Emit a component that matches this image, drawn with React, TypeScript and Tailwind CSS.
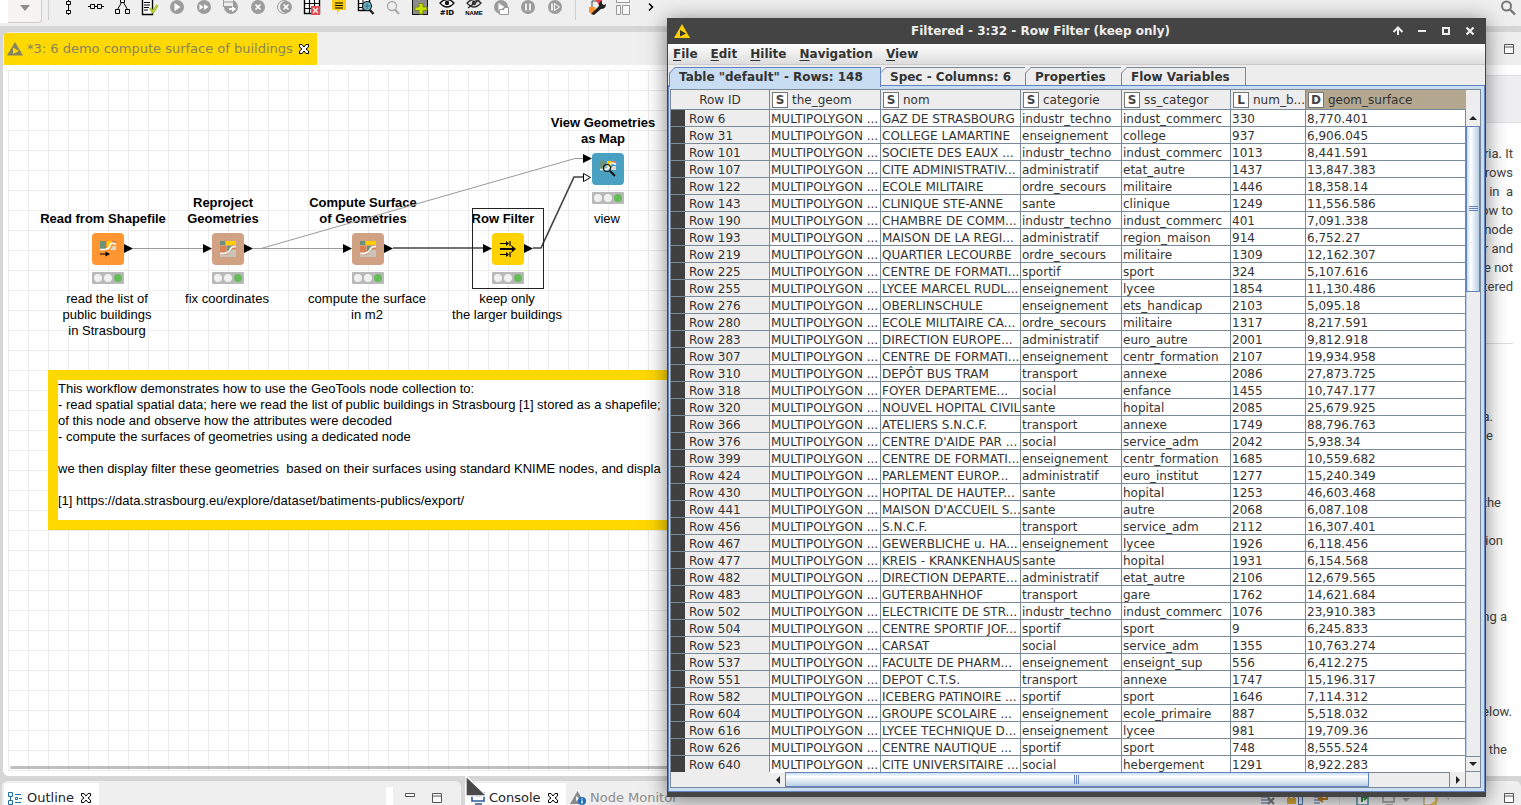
import React from "react";

type Row = [string, string, string, string, string, string];

const rows: Row[] = [
  ["Row 6", "GAZ DE STRASBOURG", "industr_techno", "indust_commerc", "330", "8,770.401"],
  ["Row 31", "COLLEGE LAMARTINE", "enseignement", "college", "937", "6,906.045"],
  ["Row 101", "SOCIETE DES EAUX ...", "industr_techno", "indust_commerc", "1013", "8,441.591"],
  ["Row 107", "CITE ADMINISTRATIV...", "administratif", "etat_autre", "1437", "13,847.383"],
  ["Row 122", "ECOLE MILITAIRE", "ordre_secours", "militaire", "1446", "18,358.14"],
  ["Row 143", "CLINIQUE STE-ANNE", "sante", "clinique", "1249", "11,556.586"],
  ["Row 190", "CHAMBRE DE COMM...", "industr_techno", "indust_commerc", "401", "7,091.338"],
  ["Row 193", "MAISON DE LA REGI...", "administratif", "region_maison", "914", "6,752.27"],
  ["Row 219", "QUARTIER LECOURBE", "ordre_secours", "militaire", "1309", "12,162.307"],
  ["Row 225", "CENTRE DE FORMATI...", "sportif", "sport", "324", "5,107.616"],
  ["Row 255", "LYCEE MARCEL RUDL...", "enseignement", "lycee", "1854", "11,130.486"],
  ["Row 276", "OBERLINSCHULE", "enseignement", "ets_handicap", "2103", "5,095.18"],
  ["Row 280", "ECOLE MILITAIRE CA...", "ordre_secours", "militaire", "1317", "8,217.591"],
  ["Row 283", "DIRECTION EUROPE...", "administratif", "euro_autre", "2001", "9,812.918"],
  ["Row 307", "CENTRE DE FORMATI...", "enseignement", "centr_formation", "2107", "19,934.958"],
  ["Row 310", "DEPÔT BUS TRAM", "transport", "annexe", "2086", "27,873.725"],
  ["Row 318", "FOYER DEPARTEME...", "social", "enfance", "1455", "10,747.177"],
  ["Row 320", "NOUVEL HOPITAL CIVIL", "sante", "hopital", "2085", "25,679.925"],
  ["Row 366", "ATELIERS S.N.C.F.", "transport", "annexe", "1749", "88,796.763"],
  ["Row 376", "CENTRE D'AIDE PAR ...", "social", "service_adm", "2042", "5,938.34"],
  ["Row 399", "CENTRE DE FORMATI...", "enseignement", "centr_formation", "1685", "10,559.682"],
  ["Row 424", "PARLEMENT EUROP...", "administratif", "euro_institut", "1277", "15,240.349"],
  ["Row 430", "HOPITAL DE HAUTEP...", "sante", "hopital", "1253", "46,603.468"],
  ["Row 441", "MAISON D'ACCUEIL S...", "sante", "autre", "2068", "6,087.108"],
  ["Row 456", "S.N.C.F.", "transport", "service_adm", "2112", "16,307.401"],
  ["Row 467", "GEWERBLICHE u. HA...", "enseignement", "lycee", "1926", "6,118.456"],
  ["Row 477", "KREIS - KRANKENHAUS", "sante", "hopital", "1931", "6,154.568"],
  ["Row 482", "DIRECTION DEPARTE...", "administratif", "etat_autre", "2106", "12,679.565"],
  ["Row 483", "GUTERBAHNHOF", "transport", "gare", "1762", "14,621.684"],
  ["Row 502", "ELECTRICITE DE STR...", "industr_techno", "indust_commerc", "1076", "23,910.383"],
  ["Row 504", "CENTRE SPORTIF JOF...", "sportif", "sport", "9", "6,245.833"],
  ["Row 523", "CARSAT", "social", "service_adm", "1355", "10,763.274"],
  ["Row 537", "FACULTE DE PHARM...", "enseignement", "enseignt_sup", "556", "6,412.275"],
  ["Row 551", "DEPOT C.T.S.", "transport", "annexe", "1747", "15,196.317"],
  ["Row 582", "ICEBERG PATINOIRE ...", "sportif", "sport", "1646", "7,114.312"],
  ["Row 604", "GROUPE SCOLAIRE ...", "enseignement", "ecole_primaire", "887", "5,518.032"],
  ["Row 616", "LYCEE TECHNIQUE D...", "enseignement", "lycee", "981", "19,709.36"],
  ["Row 626", "CENTRE NAUTIQUE ...", "sportif", "sport", "748", "8,555.524"],
  ["Row 640", "CITE UNIVERSITAIRE ...", "social", "hebergement", "1291", "8,922.283"],
];

const columns = [
  { type: "S", name: "the_geom" },
  { type: "S", name: "nom" },
  { type: "S", name: "categorie" },
  { type: "S", name: "ss_categor" },
  { type: "L", name: "num_b..." },
  { type: "D", name: "geom_surface" },
];

/* ---------- toolbar ---------- */

const Disc = ({ children }: { children?: React.ReactNode }) => (
  <>
    <circle cx="14" cy="7" r="7" fill="#9c9c9c" />
    {children}
  </>
);

const TableGlyph = () => (
  <>
    <rect x="6.500" y="-3.500" width="15" height="17" fill="#fff" stroke="#000" strokeWidth="1.400" />
    <path d="M6 3.500H21M6 8.500H21M11.500 -3V13M16.500 -3V13" stroke="#000" strokeWidth="1.200" />
  </>
);

const tools: { label: string; icon: React.ReactNode }[] = [
  {
    label: "Align vertically",
    icon: <path d="M11.500 1.500h4v3h-4zM11.500 10.500h4v3h-4zM13.500 0v1.500M13.500 4.500v6M13.500 13.500v1.500" fill="none" stroke="#000" />,
  },
  {
    label: "Align horizontally",
    icon: <path d="M8.500 4.500h4v4h-4zM15.500 4.500h4v4h-4zM6 6.500h2.500M12.500 6.500h3M19.500 6.500h2.500" fill="none" stroke="#000" />,
  },
  {
    label: "Auto layout",
    icon: <path d="M11.500 -1.500h4v4h-4zM6.500 9.500h4v4h-4zM16.500 9.500h4v4h-4zM12.500 2.500l-4 7M14.500 2.500l4 7" fill="none" stroke="#000" />,
  },
  {
    label: "Configure",
    icon: (
      <>
        <path d="M6.500 -2H16.500V14.500H6.500z" fill="#fff" stroke="#000" strokeWidth="1.400" />
        <path d="M8 2.500h6M8 5h6M8 7.500h5M8 10h4" stroke="#000" />
        <path d="M14 8l3 4 4.500-7" fill="none" stroke="#afc636" strokeWidth="2.600" />
      </>
    ),
  },
  { label: "Execute", icon: <Disc><path d="M11.500 3l6 4-6 4z" fill="#fff" /></Disc> },
  { label: "Execute all", icon: <Disc><path d="M9.500 4l4 3-4 3zM14 4l4.500 3-4.500 3z" fill="#fff" /></Disc> },
  {
    label: "Execute and open view",
    icon: (
      <Disc>
        <rect x="6.500" y="-1.500" width="10" height="8" fill="#eee" stroke="#999" />
        <path d="M7 2h9" stroke="#999" />
        <path d="M12 8h3V6l4 3-4 3v-2h-3z" fill="#fff" />
      </Disc>
    ),
  },
  { label: "Cancel", icon: <Disc><path d="M11.500 4.500l5 5M16.500 4.500l-5 5" stroke="#fff" strokeWidth="1.700" /></Disc> },
  {
    label: "Cancel all",
    icon: (
      <>
        <circle cx="13" cy="7" r="6.500" fill="none" stroke="#999" />
        <circle cx="15" cy="7" r="6" fill="#9c9c9c" />
        <path d="M12.500 4.500l5 5M17.500 4.500l-5 5" stroke="#fff" strokeWidth="1.700" />
      </>
    ),
  },
  {
    label: "Reset",
    icon: (
      <>
        <TableGlyph />
        <rect x="13" y="6" width="9" height="9" fill="#e24a4f" />
        <path d="M15 8l5 5M20 8l-5 5" stroke="#fff" strokeWidth="1.200" />
      </>
    ),
  },
  {
    label: "Workflow annotation",
    icon: (
      <>
        <path d="M7 -2H21V10H15L12 13.500V10H7z" fill="#fbce14" />
        <path d="M10 3h8M10 5.500h8M10 8h8" stroke="#000" strokeWidth="1.200" />
      </>
    ),
  },
  {
    label: "Open view",
    icon: (
      <>
        <rect x="6.500" y="-3.500" width="11" height="14" fill="#fff" stroke="#000" strokeWidth="1.400" />
        <path d="M6 3.500H18M6 7.500H18M11 -2V10" stroke="#000" />
        <circle cx="15" cy="6" r="4.500" fill="#6fb6cc" stroke="#222" strokeWidth="1.200" />
        <path d="M12 6h6M15 3v6" stroke="#346c80" />
        <path d="M18 10l3.500 4" stroke="#222" strokeWidth="2.400" />
      </>
    ),
  },
  {
    label: "Find node",
    icon: (
      <>
        <circle cx="13" cy="6" r="4.500" fill="#eee" stroke="#aaa" strokeWidth="1.300" />
        <path d="M16 9.500l4 4.500" stroke="#aaa" strokeWidth="2.200" />
      </>
    ),
  },
  {
    label: "Add",
    icon: (
      <>
        <rect x="6.500" y="-1.500" width="15" height="16" fill="#8c8c8c" stroke="#111" />
        <path d="M13 3.500h4v3.500h4v3.500h-4v3.500h-4v-3.500H9V7h4z" fill="#c8e000" stroke="#7c8a20" />
      </>
    ),
  },
  {
    label: "Show node IDs",
    icon: (
      <>
        <path d="M7 3q7-7 14 0q-7 8-14 0z" fill="#fff" stroke="#111" strokeWidth="1.300" />
        <circle cx="14" cy="3" r="2.200" fill="#111" />
        <text x="14" y="15" textAnchor="middle" fontSize="7" fontWeight="bold" fontFamily="DejaVu Sans">#ID</text>
      </>
    ),
  },
  {
    label: "Hide node names",
    icon: (
      <>
        <path d="M7 3q7-7 14 0q-7 8-14 0z" fill="#ddd" stroke="#333" strokeWidth="1.300" />
        <circle cx="14" cy="3" r="2.200" fill="#333" />
        <path d="M8 8L20 -1" stroke="#333" strokeWidth="1.500" />
        <text x="14" y="15" textAnchor="middle" fontSize="6" fontWeight="bold" fontFamily="Liberation Sans">NAME</text>
      </>
    ),
  },
  {
    label: "Step loop",
    icon: (
      <Disc>
        <path d="M11.500 3l6 4-6 4z" fill="#fff" />
        <path d="M12.500 14.500V9.500H17V7.500h4.500v7z" fill="#fff" stroke="#999" />
      </Disc>
    ),
  },
  { label: "Pause", icon: <Disc><path d="M12 3.500v7M16 3.500v7" stroke="#fff" strokeWidth="1.600" /></Disc> },
  { label: "Resume", icon: <Disc><path d="M11 3.500v7" stroke="#fff" strokeWidth="1.600" /><path d="M13.500 3.500l5 3.500-5 3.500z" fill="none" stroke="#fff" /></Disc> },
];

const ToolButton = ({ label, children }: { label: string; children: React.ReactNode }) => (
  <button aria-label={label} className="h-5 w-[27px] shrink-0">
    <svg viewBox="0 0 27 20" className="h-5 w-[27px]">{children}</svg>
  </button>
);

const Toolbar = () => (
  <header className="flex h-[26px] shrink-0 items-start bg-[#efefef]">
    <div className="h-[23px] w-2 bg-white" />
    <button aria-label="Zoom" className="flex h-[23px] w-[34px] items-start justify-center rounded-br-sm border-r border-b border-[#d0cecb] bg-[#f5f4f3] pt-[5px]">
      <svg viewBox="0 0 10 6" className="h-[6px] w-[10px]"><path d="M0 0h10L5 6z" fill="#8b8e8f" /></svg>
    </button>
    <div className="ml-[6px] h-5 w-px bg-[#d0d0d0]" />
    <div className="ml-[6px] flex">
      {tools.map((t) => (
        <ToolButton key={t.label} label={t.label}>{t.icon}</ToolButton>
      ))}
    </div>
    <div className="ml-[7px] h-5 w-px bg-[#d0d0d0]" />
    <div className="ml-[7px] flex">
      <ToolButton label="Preferences">
        <path d="M6 7h6v5q-3 3-6 0z" fill="#ff9232" />
        <path d="M9 7V1h5" fill="none" stroke="#444" />
        <path d="M12 -1h7v3l-3 3z" fill="#ee4050" />
        <path d="M8 14l8-8q-1-4 3-5v3l2 1 2-1q0 5-5 5l-7 6z" fill="#222" />
      </ToolButton>
      <ToolButton label="Layout editor">
        <path d="M6.500 -2.500h13v5h-13zM6.500 5.500h4v9h-4zM12.500 5.500h7v9h-7z" fill="#f8f8f8" stroke="#999" />
      </ToolButton>
      <ToolButton label="More">
        <path d="M12 3.500l3.500 3.500-3.500 3.500" fill="none" stroke="#000" strokeWidth="1.500" />
      </ToolButton>
    </div>
    <button aria-label="Search" className="mr-[5px] ml-auto h-4 w-4">
      <svg viewBox="0 0 16 16" className="h-4 w-4">
        <circle cx="6.500" cy="6" r="4.500" fill="none" stroke="#777" strokeWidth="2" />
        <path d="M10 9.500l5 5" stroke="#777" strokeWidth="2.400" />
      </svg>
    </button>
  </header>
);

/* ---------- shared glyphs ---------- */

const CloseX = () => (
  <svg viewBox="0 0 12 12" className="h-3 w-3">
    <path d="M1.500 1.500h2.500L6 4l2-2.500h2.500V4L8 6l2.500 2v2.500H8L6 8l-2 2.500H1.500V8L4 6 1.500 4z" fill="#fff" stroke="#000" />
  </svg>
);

const Maximize = () => (
  <svg viewBox="0 0 10 10" className="h-[10px] w-[10px]">
    <path d="M.5.5h9v9h-9zM.5 3h9" fill="#fff" stroke="#555" />
  </svg>
);

/* ---------- workflow canvas ---------- */

const SquareMap = () => (
  <>
    <rect x="8" y="8" width="5" height="4" fill="#6c9078" />
    <rect x="14" y="8" width="10" height="4" fill="#fc0" />
    <rect x="8" y="13" width="6" height="6" fill="#d98254" />
    <rect x="15" y="13" width="4" height="5" fill="#6c9078" />
    <rect x="20" y="13" width="4" height="3" fill="#d98254" />
    <path d="M8 24V22h7q3-1 4-5h5v7z" fill="#c9c3b8" />
    <path d="M8 20.500h4q5-1 6-4t6-3" fill="none" stroke="#fff" strokeWidth="1.600" />
  </>
);

const FlatMap = () => (
  <>
    <rect x="8" y="8" width="6" height="8" fill="#6c9078" />
    <path d="M15 8h5l-2 6-3 2z" fill="#fc0" />
    <path d="M20 8h4v3h-4z" fill="#d98254" />
    <path d="M18 17l3-4h3v4z" fill="#dfdad0" />
    <path d="M8 16.500h4q5 0 6-4t6-1" fill="none" stroke="#fff" strokeWidth="1.600" />
  </>
);

type NodeDef = {
  place: string;
  title: string;
  note: string;
  color: string;
  glyph: React.ReactNode;
};

const nodes: NodeDef[] = [
  {
    place: "left-[29px] top-[130px]",
    title: "\nRead from Shapefile",
    note: "read the list of\npublic buildings\nin Strasbourg",
    color: "bg-[#ff9632]",
    glyph: <><FlatMap /><path d="M8 21h7" stroke="#000" strokeWidth="1.200" /><path d="M13.500 18.500l4.500 2.500-4.500 2.500z" /></>,
  },
  {
    place: "left-[149px] top-[130px]",
    title: "Reproject\nGeometries",
    note: "fix coordinates",
    color: "bg-[#d1a184]",
    glyph: <SquareMap />,
  },
  {
    place: "left-[289px] top-[130px]",
    title: "Compute Surface\nof Geometries",
    note: "compute the surface\nin m2",
    color: "bg-[#d1a184]",
    glyph: <SquareMap />,
  },
  {
    place: "left-[429px] top-[130px]",
    title: "\nRow Filter",
    note: "keep only\nthe larger buildings",
    color: "bg-[#ffd200]",
    glyph: (
      <>
        <path d="M8 10.500h7M8 21.500h7M18 8v5M18 19v5" stroke="#000" strokeWidth="1.200" />
        <path d="M8 16h13" stroke="#000" strokeWidth="2" />
        <path d="M14 8l3 2.500-3 2.500zM14 19l3 2.500-3 2.500zM19 12l5 4-5 4 1.500-4z" />
      </>
    ),
  },
  {
    place: "left-[529px] top-[50px]",
    title: "View Geometries\nas Map",
    note: "view",
    color: "bg-[#4aa0c0]",
    glyph: (
      <>
        <FlatMap />
        <circle cx="15" cy="15" r="3.500" fill="#fff" fillOpacity=".3" stroke="#111" strokeWidth="1.200" />
        <path d="M18 18l5 5" stroke="#111" strokeWidth="2" />
      </>
    ),
  },
];

const NodeCard = ({ node }: { node: NodeDef }) => (
  <div className={`absolute flex w-[152px] flex-col items-center whitespace-pre text-center text-[13px] leading-4 ${node.place}`}>
    <div className="mr-[10px] h-8 font-bold">{node.title}</div>
    <div className={`mt-[6px] h-8 w-8 rounded-sm ${node.color}`}>
      <svg viewBox="0 0 32 32" className="h-8 w-8">{node.glyph}</svg>
    </div>
    <div className="mt-[7px] flex h-3 w-8 items-center justify-center gap-[2px] rounded-[1px] bg-[#b9b9b9]">
      <span className="h-2 w-2 rounded-full bg-[#f0f0f0]" />
      <span className="h-2 w-2 rounded-full bg-[#f0f0f0]" />
      <span className="h-2 w-2 rounded-full bg-[#66bc59]" />
    </div>
    <div className="mt-[7px] mr-[2px]">{node.note}</div>
  </div>
);

const annotation = `This workflow demonstrates how to use the GeoTools node collection to:
- read spatial spatial data; here we read the list of public buildings in Strasbourg [1] stored as a shapefile;
of this node and observe how the attributes were decoded
- compute the surfaces of geometries using a dedicated node

we then display filter these geometries  based on their surfaces using standard KNIME nodes, and displa

[1] https://data.strasbourg.eu/explore/dataset/batiments-publics/export/`;

const Canvas = () => (
  <div className="relative flex-1 overflow-hidden bg-white pt-[5px] pb-[5px] pl-[5px] font-['Liberation_Sans',sans-serif] text-black">
    <div className="h-full bg-[linear-gradient(to_right,#ececec_1px,transparent_1px),linear-gradient(to_bottom,#ececec_1px,transparent_1px)] bg-size-[20px_20px]" />
    {nodes.map((n) => (
      <NodeCard key={n.title} node={n} />
    ))}
    <svg viewBox="0 0 664 300" className="absolute top-0 left-0 h-[300px] w-[664px]">
      <g fill="none" stroke="#999">
        <path d="M130 183.500H202M250 183.500H342" />
        <path d="M258 183.500L572 93.500H582" />
      </g>
      <g fill="none" stroke="#444" strokeWidth="1.700">
        <path d="M390 183H482M530 183H538L571 112H580" />
      </g>
      <path d="M121 179l9 4.500-9 4.500zM200 179l9 4.500-9 4.500zM241 179l9 4.500-9 4.500zM340 179l9 4.500-9 4.500zM381 179l9 4.500-9 4.500zM480 179l9 4.500-9 4.500zM521 179l9 4.500-9 4.500zM580 89l9 4.500-9 4.500z" />
      <path d="M580.500 108.500l7 4-7 4z" fill="#fff" stroke="#000" />
      <rect x="469.500" y="143.500" width="71" height="80" fill="none" stroke="#222" />
    </svg>
    <div className="absolute top-[305px] right-0 left-[45px] h-[160px] overflow-hidden border-10 border-r-0 border-[#ffd800] bg-white pt-px text-[13px] leading-4 whitespace-pre">
      {annotation}
    </div>
    <div className="absolute right-0 bottom-[7px] left-[7px] h-[3px] rounded-full bg-black/25" />
  </div>
);

const Editor = () => (
  <section className="flex min-w-0 flex-1 flex-col overflow-hidden rounded-md bg-[#efefef]">
    <div className="flex h-[33px] shrink-0 pt-px pl-px">
      <div className="flex w-[313px] items-center bg-[#ffd800] pl-[3px] text-[13px] text-[#8a8460]">
        <svg viewBox="0 0 16 14" className="h-[14px] w-4">
          <path d="M8 0l8 13.500H0z" fill="#85835f" />
          <path d="M6 5.500l6 3.500-6 3z" fill="#ffd800" />
        </svg>
        <span className="mr-[5px] ml-1 whitespace-nowrap">*3: 6 demo compute surface of buildings</span>
        <button aria-label="Close workflow"><CloseX /></button>
      </div>
    </div>
    <Canvas />
  </section>
);

/* ---------- node description ---------- */

const Description = () => (
  <aside className="flex w-[360px] shrink-0 flex-col bg-[#efefef]">
    <div className="flex h-[33px] shrink-0 items-center justify-end pr-[7px]">
      <button aria-label="Maximize description"><Maximize /></button>
    </div>
    <div className="flex min-h-0 flex-1 flex-col overflow-hidden bg-white pt-[10px] text-right font-[Roboto,sans-serif] text-[13px] leading-[19px] whitespace-pre text-[#444]">
      <div className="h-12 shrink-0 border-t border-b border-[#dfdfe1] bg-[#efeff1]" />
      <p className="mt-[21px] pr-2">{"ria. It\nrows\nin  a\now to\nnode\nr and\ne not\ntered"}</p>
      <hr className="mt-[47px] mr-2 border-[#ddd]" />
      <p className="mt-[63px] pr-7">{"a.\ne"}</p>
      <p className="mt-12 pr-5">the</p>
      <p className="mt-[19px] pr-[18px]">tion</p>
      <p className="mt-[57px] pr-[14px]">ng a</p>
      <p className="mt-[76px] pr-[9px]">elow.</p>
      <p className="mt-[19px] pr-[14px]">the</p>
    </div>
  </aside>
);

/* ---------- bottom views ---------- */

const BottomViews = () => (
  <footer className="flex h-6 shrink-0 gap-1 overflow-hidden pl-[2px] text-[13px]">
    <section className="flex w-[459px] shrink-0 items-start rounded-t-md bg-[#efefef] pt-[2px]">
      <div className="ml-[2px] flex h-[30px] w-[95px] items-center bg-white pl-1">
        <svg viewBox="0 0 14 14" className="h-[14px] w-[14px]">
          <path d="M.5 1.500h4v4h-4zM.5 9.500h4v4h-4zM7.500 6.500h2v2h-2z" fill="#fff" stroke="#1a6fa8" />
          <path d="M7 3.500h6M11 7.500h3M7 11.500h6M2.500 6v3" stroke="#1a6fa8" />
        </svg>
        <span className="mr-[6px] ml-[5px] text-[#222]">Outline</span>
        <button aria-label="Close outline"><CloseX /></button>
      </div>
      <div className="mt-1 mr-3 ml-auto h-5 w-[7px] bg-white" />
      <button aria-label="Minimize outline" className="mt-[10px]">
        <svg viewBox="0 0 10 4" className="block h-1 w-[10px]"><path d="M.5.5h9v3h-9z" fill="#fff" stroke="#555" /></svg>
      </button>
      <button aria-label="Maximize outline" className="mt-[10px] mr-[19px] ml-[17px] flex"><Maximize /></button>
    </section>
    <section className="flex min-w-0 flex-1 items-start rounded-t-md bg-[#efefef] pt-[2px]">
      <div className="flex h-[30px] w-[101px] items-center bg-white pl-[6px]">
        <svg viewBox="0 0 14 14" className="h-[14px] w-[14px]">
          <path d="M1 2h12v8H1z" fill="#fff" stroke="#2c5aa0" strokeWidth="1.600" />
          <path d="M3.500 5h7M4 13h7" stroke="#2c5aa0" strokeWidth="1.400" />
        </svg>
        <span className="mr-[6px] ml-1 text-[#222]">Console</span>
        <button aria-label="Close console"><CloseX /></button>
      </div>
      <div className="flex h-[30px] items-center pl-1">
        <svg viewBox="0 0 16 14" className="h-[14px] w-4">
          <path d="M7.500 0l7.500 13H0z" fill="#8a8a8a" />
          <path d="M6 5l4 3-4 2z" fill="#efefef" />
          <circle cx="12" cy="10" r="4" fill="#1d6fb5" />
          <path d="M12 7.500v1M12 9.500v3" stroke="#fff" strokeWidth="1.500" />
        </svg>
        <span className="ml-1 whitespace-nowrap text-[#8c8c8c]">Node Monitor</span>
      </div>
      <div className="mr-[55px] ml-auto flex pt-2">
        <svg viewBox="0 0 190 16" className="h-4 w-[190px]">
          <path d="M2 3h11M2 6h9M2 9h8M2 12h8" stroke="#4a6b9c" />
          <path d="M9 7l6 6M15 7l-6 6" stroke="#777" strokeWidth="2" />
          <path d="M28 7h9v6h-9z" fill="#d8a83a" />
          <path d="M30 7V3h5v4" fill="none" stroke="#9a7a30" strokeWidth="1.500" />
          <path d="M39.500 2.500h4v11h-4z" fill="#dce8f5" stroke="#4a6b9c" />
          <path d="M55 3h8M55 6h8M55 9h6M55 12h6" stroke="#4a6b9c" />
          <path d="M68 4v4h-6M64 5l-4 3 4 3" fill="none" stroke="#c07f1a" strokeWidth="2" />
          <path d="M80.500 0v16" stroke="#ddd" />
          <path d="M98 4h11v10H98z" fill="#fff" stroke="#4a90a8" strokeWidth="1.500" />
          <path d="M103 11V6h5M105 4l3 2-3 3" stroke="#2b8a3e" fill="none" strokeWidth="2" />
          <path d="M124 3h11v8h-11zM127 14h7" fill="none" stroke="#aaa" strokeWidth="1.800" />
          <path d="M143 7h8l-4 4zM188 7h8l-4 4z" fill="#aaa" />
          <path d="M165 3h12v11h-12z" fill="#fff" stroke="#b09a50" />
          <path d="M172 13q6-1 6-6" stroke="#f0c040" fill="none" strokeWidth="2" />
        </svg>
      </div>
      <button aria-label="Maximize console" className="mt-[10px] mr-[7px] flex"><Maximize /></button>
    </section>
  </footer>
);

/* ---------- result window ---------- */

const TabCorner = ({ fill, stroke }: { fill: string; stroke: string }) => (
  <svg viewBox="0 0 6 6" className="absolute -top-px -left-px h-[6px] w-[6px]">
    <path d="M0 0H6L0 6z" fill="#ededed" />
    <path d="M1 6L6 .5V6z" fill={fill} />
    <path d="M.5 6L6 .5" stroke={stroke} />
  </svg>
);

const menu = ["File", "Edit", "Hilite", "Navigation", "View"];
const tabs = [
  { label: "Spec - Columns: 6", width: "w-[145px]" },
  { label: "Properties", width: "w-24" },
  { label: "Flow Variables", width: "w-[124px]" },
];

const cell = "overflow-hidden border-r border-b border-[#7a8a99] bg-white p-0 pt-[2px] pl-px";

const ResultTable = () => (
  <table className="w-full table-fixed border-separate border-spacing-0 text-left text-xs leading-[14px] whitespace-nowrap">
    <colgroup>
      <col className="w-[14px]" />
      <col className="w-[85px]" />
      <col className="w-[111px]" />
      <col className="w-[140px]" />
      <col className="w-[101px]" />
      <col className="w-[109px]" />
      <col className="w-[75px]" />
      <col />
    </colgroup>
    <thead>
      <tr className="h-5">
        <th colSpan={2} className="border-r border-b border-[#7a8a99] p-0 text-center font-normal">Row ID</th>
        {columns.map((c) => (
          <th
            key={c.name}
            className={`overflow-hidden border-r border-b border-[#7a8a99] p-0 font-normal ${c.type === "D" ? "border-r-[#b3a78f] bg-[#b3a78f]" : ""}`}
          >
            <div className="flex items-center gap-1 pl-[2px]">
              <span className="flex h-4 w-4 shrink-0 items-center justify-center border border-[#777] bg-white font-bold text-[#444]">{c.type}</span>
              {c.name}
            </div>
          </th>
        ))}
      </tr>
    </thead>
    <tbody>
      {rows.map(([id, nom, categorie, ss, num, surface]) => (
        <tr key={id} className="h-[17px]">
          <td className="border-b border-[#7a8a99] bg-[#404040] p-0" />
          <th scope="row" className="border-r border-b border-[#7a8a99] p-0 pt-[2px] pl-1 font-normal">{id}</th>
          <td className={cell}>MULTIPOLYGON ...</td>
          <td className={cell}>{nom}</td>
          <td className={cell}>{categorie}</td>
          <td className={cell}>{ss}</td>
          <td className={cell}>{num}</td>
          <td className={cell}>{surface}</td>
        </tr>
      ))}
    </tbody>
  </table>
);

const scrollButton = "flex shrink-0 items-center justify-center bg-[#eee] border-[#7a8a99]";

const ResultWindow = () => (
  <div
    role="dialog"
    aria-label="Filtered"
    className="absolute top-[18px] left-[667px] flex w-[819px] flex-col border-x border-b-5 border-[#444] bg-[#ededed] text-[#333] shadow-[0_3px_20px_rgba(0,0,0,0.5)]"
  >
    <div className="relative flex h-[26px] items-center justify-end bg-[#444] text-[#eee]">
      <svg viewBox="0 0 16 14" className="mr-auto ml-[6px] h-[14px] w-4">
        <path d="M8 0l8 14H0z" fill="#fcd000" />
        <path d="M6 6l6 3.500-6 3z" fill="#333" />
      </svg>
      <h1 className="absolute inset-x-0 mx-auto w-fit pr-[72px] text-xs font-bold">Filtered - 3:32 - Row Filter (keep only)</h1>
      <div className="relative flex gap-3 pr-[9px]">
        <button aria-label="Shade">
          <svg viewBox="0 0 12 12" className="h-3 w-3"><path d="M6 10V3M1.500 7L6 2.500 10.500 7" fill="none" stroke="#eee" strokeWidth="2" /></svg>
        </button>
        <button aria-label="Minimize">
          <svg viewBox="0 0 12 12" className="h-3 w-3"><path d="M2 6h8" stroke="#eee" strokeWidth="2" /></svg>
        </button>
        <button aria-label="Maximize">
          <svg viewBox="0 0 12 12" className="h-3 w-3"><path d="M3 3h6v6H3z" fill="none" stroke="#eee" strokeWidth="2" /></svg>
        </button>
        <button aria-label="Close">
          <svg viewBox="0 0 12 12" className="h-3 w-3"><path d="M2.500 2.500l7 7M9.500 2.500l-7 7" stroke="#eee" strokeWidth="2.200" /></svg>
        </button>
      </div>
    </div>

    <nav className="flex h-[21px] items-center gap-[13px] border-b border-[#ccc] bg-linear-to-b from-white to-[#dcdcdc] pl-[5px] text-xs font-bold">
      {menu.map((m) => (
        <button key={m}>
          <span className="underline underline-offset-2">{m[0]}</span>
          {m.slice(1)}
        </button>
      ))}
    </nav>

    <div role="tablist" className="flex h-5 items-end pl-px text-left text-xs font-bold whitespace-nowrap">
      <button role="tab" aria-selected="true" className="relative z-10 -mb-[2px] h-5 w-[212px] border border-b-0 border-[#6382bf] bg-[#c8ddf2] pb-[2px] pl-[9px] text-left">
        <TabCorner fill="#c8ddf2" stroke="#6382bf" />
        Table "default" - Rows: 148
      </button>
      {tabs.map((t) => (
        <button key={t.label} role="tab" aria-selected="false" className={`relative h-[18px] border-t border-r border-[#7a8a99] pl-[9px] text-left ${t.width}`}>
          <TabCorner fill="#ededed" stroke="#7a8a99" />
          {t.label}
        </button>
      ))}
    </div>

    <div className="border border-[#6382bf] bg-[#c8ddf2] py-[3px] pr-[3px] pl-px">
      <div className="border border-[#7a8a99] bg-[#ededed]">
        <div className="flex h-[682px] overflow-hidden">
          <div className="min-w-0 flex-1">
            <ResultTable />
          </div>
          <div className="flex w-[14px] shrink-0 flex-col pt-5">
            <button aria-label="Scroll up" className={`h-4 ${scrollButton}`}>
              <svg viewBox="0 0 8 4" className="h-1 w-2"><path d="M0 4h8L4 0z" fill="#222" /></svg>
            </button>
            <div className="flex h-[166px] items-center justify-center border border-[#6382bf] bg-linear-to-r from-[#c8ddf2] via-white via-30% to-[#b8cfe5]">
              <svg viewBox="0 0 9 6" className="h-[6px] w-[9px]"><path d="M0 .5h9M0 2.500h9M0 4.500h9" stroke="#6382bf" /></svg>
            </div>
            <div className="flex-1 border-l border-[#b8cfe5]" />
            <button aria-label="Scroll down" className={`h-4 border-y ${scrollButton}`}>
              <svg viewBox="0 0 8 4" className="h-1 w-2"><path d="M0 0h8L4 4z" fill="#222" /></svg>
            </button>
          </div>
        </div>
        <div className="flex h-[15px] pr-[14px] pl-[99px]">
          <button aria-label="Scroll left" className={`w-[15px] border-t border-t-white ${scrollButton}`}>
            <svg viewBox="0 0 4 8" className="h-2 w-1"><path d="M4 0v8L0 4z" fill="#222" /></svg>
          </button>
          <div className="flex w-[584px] items-center justify-center border border-[#6382bf] bg-linear-to-b from-[#c8ddf2] via-white via-30% to-[#b8cfe5]">
            <svg viewBox="0 0 6 9" className="h-[9px] w-[6px]"><path d="M.5 0v9M2.500 0v9M4.500 0v9" stroke="#6382bf" /></svg>
          </div>
          <div className="flex-1 border-t border-[#7a8a99]" />
          <button aria-label="Scroll right" className={`w-[17px] border-x ${scrollButton}`}>
            <svg viewBox="0 0 4 8" className="h-2 w-1"><path d="M0 0v8l4-4z" fill="#222" /></svg>
          </button>
        </div>
      </div>
    </div>
  </div>
);

const Pointer = () => (
  <svg viewBox="0 0 24 24" className="absolute top-[775px] left-[465px] h-6 w-6">
    <path d="M1 1v20h21z" fill="#4a4a4a" stroke="#fff" strokeWidth="1.300" />
  </svg>
);

export default function App() {
  return (
    <div className="relative flex h-screen flex-col overflow-hidden bg-[#d6d6d6] font-['DejaVu_Sans',sans-serif]">
      <Toolbar />
      <main className="mt-[6px] mb-[5px] flex min-h-0 flex-1 gap-1 pl-[3px]">
        <Editor />
        <Description />
      </main>
      <BottomViews />
      <ResultWindow />
      <Pointer />
    </div>
  );
}
